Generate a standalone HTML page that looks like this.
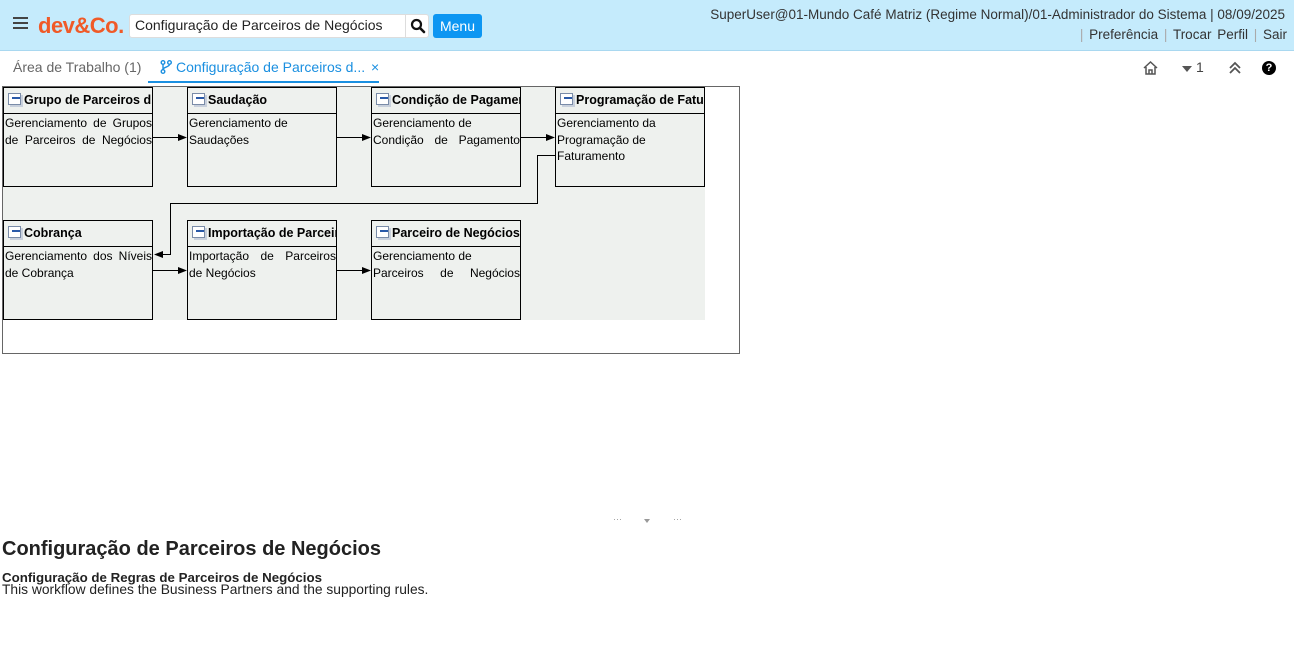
<!DOCTYPE html>
<html><head><meta charset="utf-8"><style>
*{margin:0;padding:0;box-sizing:border-box}
body{width:1294px;height:671px;background:#fff;font-family:"Liberation Sans","DejaVu Sans",sans-serif;position:relative;overflow:hidden;color:#333}
.top{position:absolute;left:0;top:0;width:1294px;height:51px;background:#c5ebfc;border-bottom:1px solid #a9d8f0}
.abs{position:absolute;white-space:nowrap}
.box{position:absolute;width:150px;height:100px;border:1px solid #000;background:#eef1ee;font-family:"Liberation Sans",sans-serif;font-size:12px;color:#000;overflow:hidden}
.box .h{height:26px;border-bottom:1px solid #000;font-weight:bold;font-size:12.5px;padding:5px 0 0 20px;white-space:nowrap;position:relative}
.box .h:before{content:"";position:absolute;left:4px;top:5px;width:11px;height:10px;border:1px solid #7a8ca8;background:#fff;box-shadow:2px 2px 0 0 #c8d0dc}
.box .h:after{content:"";position:absolute;left:8px;top:9px;width:8px;height:2px;background:#2a5aa8}
.box .b{padding:1px 0 0 1px;line-height:16.5px}
.box .b div{white-space:nowrap;width:147px}
.box .b .j{display:flex;justify-content:space-between}
</style></head><body>
<div class="top"></div>
<div class="abs" style="left:13px;top:17px;width:15px;height:2px;background:#444;box-shadow:0 5px 0 #444,0 10px 0 #444"></div>
<div class="abs" style="left:38px;top:13px;font-size:22px;font-weight:bold;color:#f05a28;letter-spacing:-0.5px">dev&amp;Co.</div>
<div class="abs" style="left:129px;top:14px;width:300px;height:24px;background:#fff;border:1px solid #ddd;border-radius:3px"></div>
<div class="abs" style="left:135px;top:17px;font-size:14px;color:#222">Configuração de Parceiros de Negócios</div>
<div class="abs" style="left:405px;top:15px;width:1px;height:22px;background:#ddd"></div>
<svg class="abs" style="left:410px;top:18px" width="16" height="16" viewBox="0 0 16 16"><circle cx="6.5" cy="6.5" r="4.5" fill="none" stroke="#111" stroke-width="2.2"/><path d="M10 10l4 4" stroke="#111" stroke-width="2.6" stroke-linecap="round"/></svg>
<div class="abs" style="left:433px;top:14px;width:49px;height:24px;background:#0d96f2;border-radius:3px;color:#fff;font-size:14px;text-align:center;line-height:24px">Menu</div>
<div class="abs" style="right:9px;top:7px;font-size:13.5px;color:#333">SuperUser@01-Mundo Café Matriz (Regime Normal)/01-Administrador do Sistema | 08/09/2025</div>
<div class="abs" style="right:7px;top:27px;font-size:13.5px;color:#333;word-spacing:2px"><span style="color:#aaa">|</span> Preferência <span style="color:#aaa">|</span> Trocar Perfil <span style="color:#aaa">|</span> Sair</div>
<div class="abs" style="left:13px;top:59px;font-size:14px;color:#666">Área de Trabalho (1)</div>
<svg class="abs" style="left:160px;top:60px" width="12" height="14" viewBox="0 0 12 14"><circle cx="3" cy="2.5" r="1.8" fill="none" stroke="#1a8fe0" stroke-width="1.4"/><circle cx="3" cy="11.5" r="1.8" fill="none" stroke="#1a8fe0" stroke-width="1.4"/><circle cx="9.5" cy="2.5" r="1.8" fill="none" stroke="#1a8fe0" stroke-width="1.4"/><path d="M3 4.3v5.4M9.5 4.3c0 3-6.5 2.5-6.5 5.4" fill="none" stroke="#1a8fe0" stroke-width="1.4"/></svg>
<div class="abs" style="left:176px;top:59px;font-size:14px;color:#1a8fe0">Configuração de Parceiros d... <span style="margin-left:2px">×</span></div>
<div class="abs" style="left:148px;top:81px;width:231px;height:2px;background:#1a8fe0"></div>
<svg class="abs" style="left:1142px;top:60px" width="17" height="16" viewBox="0 0 17 16"><path d="M2 8L8.5 2 15 8M4 7v7h9V7M7 14V10h3v4" fill="none" stroke="#555" stroke-width="1.5"/></svg>
<div class="abs" style="left:1182px;top:66px;width:0;height:0;border-left:5px solid transparent;border-right:5px solid transparent;border-top:6px solid #555"></div>
<div class="abs" style="left:1196px;top:59px;font-size:14px;color:#444">1</div>
<svg class="abs" style="left:1228px;top:61px" width="14" height="14" viewBox="0 0 14 14"><path d="M2 7l5-5 5 5M2 12l5-5 5 5" fill="none" stroke="#555" stroke-width="1.8"/></svg>
<div class="abs" style="left:1262px;top:61px;width:14px;height:14px;border-radius:50%;background:#000;color:#fff;font-size:11px;font-weight:bold;text-align:center;line-height:14px">?</div>

<div class="abs" style="left:2px;top:86px;width:738px;height:268px;border:1px solid #666"></div>
<div class="abs" style="left:3px;top:87px;width:702px;height:233px;background:#eef1ee"></div>
<svg class="abs" style="left:0;top:0" width="740" height="330">
<g stroke="#000" stroke-width="1" fill="none">
<path d="M153 137.5H180M337 137.5H364M521 137.5H548M337 270.5H364M153 270.5H180M555 155.5H537.5V203.5H170.5V254.5H162"/>
</g>
<g fill="#000">
<path d="M187 137.5l-9-3.5v7zM371 137.5l-9-3.5v7zM555 137.5l-9-3.5v7zM371 270.5l-9-3.5v7zM187 270.5l-9-3.5v7zM154 254.5l9-3.5v7z"/>
</g>
</svg>
<div class="box" style="left:3px;top:87px"><div class="h">Grupo de Parceiros d.</div><div class="b"><div class="j"><span>Gerenciamento</span><span>de</span><span>Grupos</span></div><div class="j"><span>de</span><span>Parceiros</span><span>de</span><span>Negócios</span></div></div></div>
<div class="box" style="left:187px;top:87px"><div class="h">Saudação</div><div class="b"><div>Gerenciamento de</div><div>Saudações</div></div></div>
<div class="box" style="left:371px;top:87px"><div class="h">Condição de Pagamento</div><div class="b"><div>Gerenciamento de</div><div class="j"><span>Condição</span><span>de</span><span>Pagamento</span></div></div></div>
<div class="box" style="left:555px;top:87px"><div class="h">Programação de Faturamento</div><div class="b"><div>Gerenciamento da</div><div>Programação de</div><div>Faturamento</div></div></div>
<div class="box" style="left:3px;top:220px"><div class="h">Cobrança</div><div class="b"><div class="j"><span>Gerenciamento</span><span>dos</span><span>Níveis</span></div><div>de Cobrança</div></div></div>
<div class="box" style="left:187px;top:220px"><div class="h">Importação de Parceiros</div><div class="b"><div class="j"><span>Importação</span><span>de</span><span>Parceiros</span></div><div>de Negócios</div></div></div>
<div class="box" style="left:371px;top:220px"><div class="h">Parceiro de Negócios</div><div class="b"><div>Gerenciamento de</div><div class="j"><span>Parceiros</span><span>de</span><span>Negócios</span></div></div></div>

<div class="abs" style="left:613px;top:514px;font-size:9px;color:#999">···</div>
<div class="abs" style="left:644px;top:519px;width:0;height:0;border-left:3px solid transparent;border-right:3px solid transparent;border-top:4px solid #999"></div>
<div class="abs" style="left:673px;top:514px;font-size:9px;color:#999">···</div>
<div class="abs" style="left:2px;top:538px;font-size:20px;font-weight:bold;color:#222">Configuração de Parceiros de Negócios</div>
<div class="abs" style="left:2px;top:570px;font-size:13.3px;font-weight:bold;color:#222">Configuração de Regras de Parceiros de Negócios</div>
<div class="abs" style="left:2px;top:582px;font-size:13.8px;color:#222">This workflow defines the Business Partners and the supporting rules.</div>
</body></html>
